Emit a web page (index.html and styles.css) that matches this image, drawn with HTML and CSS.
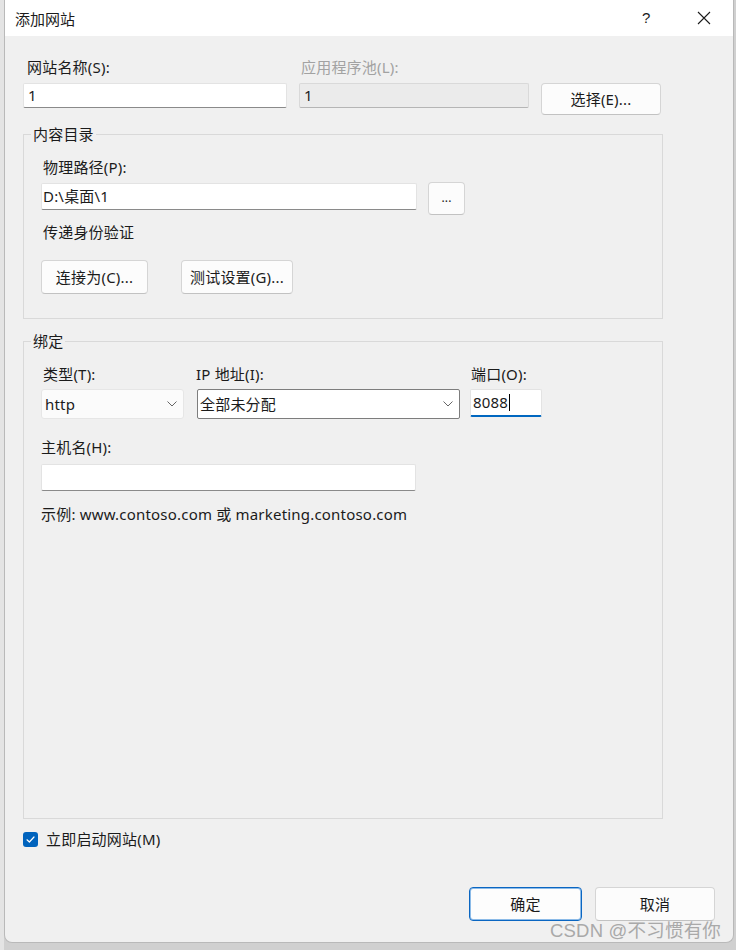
FILE: index.html
```html
<!DOCTYPE html>
<html lang="zh-CN">
<head>
<meta charset="utf-8">
<title>添加网站</title>
<link rel="stylesheet" href="styles.css">
</head>
<body>
<div class="screen">
  <div class="dialog">
    <div class="titlebar">
      <span class="title">添加网站</span>
      <span class="help">?</span>
      <span class="close">
        <svg width="14" height="14" viewBox="0 0 14 14"><path d="M1 1 L13 13 M13 1 L1 13" stroke="#1b1b1b" stroke-width="1.1" fill="none"/></svg>
      </span>
    </div>
    <div class="body">
      <div class="site-grid">
        <span class="lbl lbl-name">网站名称(S):</span>
        <span class="lbl lbl-pool">应用程序池(L):</span>
        <span></span>
        <div class="field">1</div>
        <div class="field field-disabled">1</div>
        <div class="btn btn-select">选择(E)...</div>
      </div>

      <fieldset class="group">
        <legend>内容目录</legend>
        <div class="group-inner group-inner-content">
          <div class="lbl lbl-in lbl-path">物理路径(P):</div>
          <div class="path-row">
            <div class="field field-path">D:\桌面\1</div>
            <div class="btn btn-browse">...</div>
          </div>
          <div class="lbl lbl-in lbl-auth">传递身份验证</div>
          <div class="auth-row">
            <div class="btn btn-connect">连接为(C)...</div>
            <div class="btn btn-test">测试设置(G)...</div>
          </div>
        </div>
      </fieldset>

      <fieldset class="group group-binding">
        <legend>绑定</legend>
        <div class="group-inner group-inner-binding">
          <div class="bind-grid">
            <span class="lbl lbl-type">类型(T):</span>
            <span class="lbl lbl-ip">IP 地址(I):</span>
            <span class="lbl lbl-port">端口(O):</span>
            <div class="select select-type">
              <span>http</span>
              <svg class="chev" width="10" height="6" viewBox="0 0 10 6"><path d="M0.5 0.5 L5 5 L9.5 0.5" stroke="#666" stroke-width="1" fill="none"/></svg>
            </div>
            <div class="select select-ip">
              <span>全部未分配</span>
              <svg class="chev" width="10" height="6" viewBox="0 0 10 6"><path d="M0.5 0.5 L5 5 L9.5 0.5" stroke="#666" stroke-width="1" fill="none"/></svg>
            </div>
            <div class="field field-port">8088<span class="caret"></span></div>
          </div>
          <div class="lbl lbl-in lbl-host">主机名(H):</div>
          <div class="field field-host"></div>
          <div class="lbl lbl-in lbl-example">示例: www.contoso.com 或 marketing.contoso.com</div>
        </div>
      </fieldset>

      <div class="check-row">
        <span class="checkbox">
          <svg width="15" height="15" viewBox="0 0 15 15"><path d="M4 7.8 L6.4 10 L11 5" stroke="#fff" stroke-width="1.2" fill="none" stroke-linecap="round" stroke-linejoin="round"/></svg>
        </span>
        <span class="check-label">立即启动网站(M)</span>
      </div>

      <div class="actions">
        <div class="btn btn-ok">确定</div>
        <div class="btn btn-cancel">取消</div>
      </div>
    </div>
  </div>
  <div class="watermark">CSDN @不习惯有你</div>
</div>
</body>
</html>
```

FILE: styles.css
```css
* { box-sizing: border-box; }

html, body {
  margin: 0;
  padding: 0;
}

body {
  background: #d6d6d6;
  font-family: "Noto Sans", "Noto Sans CJK SC", sans-serif;
  font-size: 15px;
  letter-spacing: 0.2px;
  line-height: 20px;
  color: #1b1b1b;
}

.screen {
  position: relative;
  width: 736px;
  height: 950px;
  overflow: hidden;
  background: linear-gradient(to right, #e4e4e4 0, #e4e4e4 4px, #d0d0d0 4px);
}

.dialog {
  margin-left: 4px;
  width: 730px;
  height: 943px;
  background: #f0f0f0;
  border: 1px solid #b9b9b9;
  border-top: none;
  border-radius: 0 0 8px 8px;
  display: flex;
  flex-direction: column;
  overflow: hidden;
}

.titlebar {
  height: 36px;
  background: #ffffff;
  display: flex;
  align-items: center;
  padding-left: 10px;
  flex-shrink: 0;
}

.title {
  font-size: 15px;
  letter-spacing: 0;
  flex: 1;
  padding-top: 1px;
}

.help {
  font-size: 15px;
  width: 12px;
  margin-right: 43px;
  font-family: "Liberation Sans", sans-serif;
}

.close {
  display: flex;
  width: 14px;
  height: 14px;
  margin-right: 22px;
}

.body {
  flex: 1;
  padding: 21px 18px 0 18px;
  display: flex;
  flex-direction: column;
}

/* top row */
.site-grid {
  display: grid;
  grid-template-columns: 264px 230px 120px;
  column-gap: 12px;
  row-gap: 6px;
  align-items: start;
}

.lbl-name { padding-left: 4px; }
.lbl-pool { padding-left: 2px; color: #a2a2a2; }

.field {
  height: 25px;
  background: #ffffff;
  border: 1px solid #e3e3e3;
  border-bottom-color: #8a8a8a;
  border-radius: 2px;
  padding-left: 4px;
  line-height: 23px;
  white-space: nowrap;
}

.field-disabled {
  background: #ebebeb;
  border-color: #d9d9d9;
  border-bottom-color: #b5b5b5;
}

.btn {
  display: flex;
  align-items: center;
  justify-content: center;
  background: #fcfcfc;
  border: 1px solid #d5d5d5;
  border-bottom-color: #c2c2c2;
  border-radius: 4px;
  white-space: nowrap;
}

.btn-select { height: 32px; }

/* group boxes */
.group {
  margin: 9px 0 0 0;
  padding: 0;
  width: 640px;
  min-width: 0;
  border: 1px solid #d9d9d9;
}

.group legend {
  margin-left: 7px;
  padding: 0 2px;
  line-height: 20px;
}

.group-inner {
  padding-left: 17px;
}

.group-inner-content { padding-bottom: 24px; }

.lbl-in { padding-left: 2px; }

.lbl-path { margin-top: 13px; }

.path-row {
  margin-top: 5px;
  display: flex;
  align-items: flex-start;
  gap: 11px;
}

.field-path {
  margin-top: 1px;
  width: 376px;
  height: 27px;
  line-height: 25px;
  padding-left: 1px;
}

.btn-browse {
  width: 37px;
  height: 33px;
  font-size: 12px;
  padding-bottom: 2px;
}

.lbl-auth { margin-top: 7px; }

.auth-row {
  margin-top: 18px;
  display: flex;
  gap: 33px;
}

.btn-connect { width: 107px; height: 34px; }
.btn-test { width: 112px; height: 34px; }

/* binding */
.group-binding { margin-top: 12px; }

.group-inner-binding { padding-bottom: 294px; }

.bind-grid {
  margin-top: 13px;
  display: grid;
  grid-template-columns: 156px 273px 72px;
  row-gap: 5px;
  align-items: start;
}

.lbl-type { padding-left: 2px; }
.lbl-ip { margin-left: -1px; }
.lbl-port { padding-left: 1px; }

.select {
  height: 30px;
  display: flex;
  align-items: center;
  justify-content: space-between;
  white-space: nowrap;
}

.select-type {
  width: 143px;
  background: #fbfbfb;
  border: 1px solid #e6e6e6;
  border-radius: 3px;
  padding: 0 6px 0 3px;
}

.select-ip {
  width: 263px;
  background: #ffffff;
  border: 1px solid #7d7d7d;
  border-radius: 2px;
  padding: 0 6px 0 2px;
}

.chev { flex-shrink: 0; }

.field-port {
  height: 28px;
  width: 72px;
  border: 1px solid #e3e3e3;
  border-bottom: 2px solid #0067c0;
  line-height: 25px;
  padding-left: 2px;
  display: flex;
  align-items: center;
}

.caret {
  display: inline-block;
  width: 1px;
  height: 17px;
  background: #000;
  margin-left: 1px;
}

.lbl-host { margin-top: 18px; padding-left: 0; }

.field-host {
  margin-top: 7px;
  width: 375px;
  height: 27px;
}

.lbl-example { margin-top: 13px; padding-left: 0; }

/* checkbox */
.check-row {
  margin-top: 10px;
  display: flex;
  align-items: center;
  gap: 8px;
  height: 20px;
}

.checkbox {
  width: 15px;
  height: 15px;
  background: #0063bd;
  border-radius: 3px;
  display: flex;
}

/* footer buttons */
.actions {
  margin-top: 38px;
  display: flex;
  justify-content: flex-end;
  gap: 13px;
}

.btn-ok {
  width: 113px;
  height: 34px;
  border: 1px solid #0a66c2;
  box-shadow: inset 0 0 0 1px #8cbbe8;
  background: #fdfdfd;
}

.btn-cancel {
  width: 120px;
  height: 34px;
}

.watermark {
  position: absolute;
  left: 550px;
  top: 920px;
  font-family: "Liberation Sans", "Noto Sans CJK SC", sans-serif;
  font-size: 18.5px;
  line-height: 22px;
  color: #a9a9a9;
  white-space: nowrap;
}
```
